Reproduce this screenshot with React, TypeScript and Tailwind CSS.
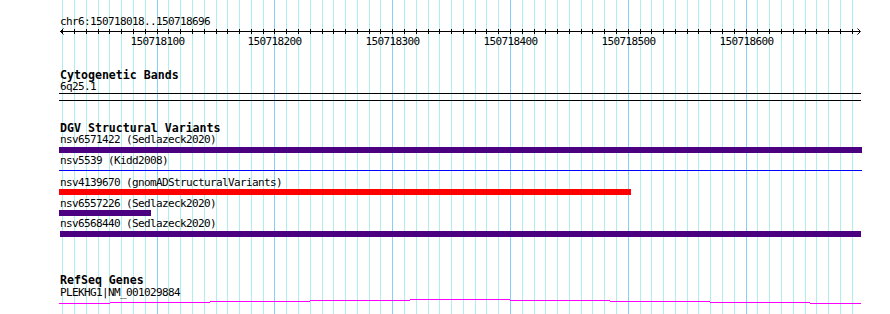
import React from "react";

const START = 150718100;
const xOf = (bp: number) => Math.round(156.6 + (bp - START) * 1.178);

const minor: number[] = [];
for (let bp = 150718020; bp <= 150718690; bp += 10) minor.push(bp);
const majors = [150718100, 150718200, 150718300, 150718400, 150718500, 150718600];

const mono = "font-['DejaVu_Sans_Mono','Liberation_Mono',monospace]";

function Label({ children, top }: { children: React.ReactNode; top: string }) {
  return (
    <div className={`${top} ml-[60px] h-[10px] text-[11px] leading-[10px] tracking-[-0.62px] text-black whitespace-nowrap ${mono}`}>
      {children}
    </div>
  );
}

function Title({ children, top }: { children: React.ReactNode; top: string }) {
  return (
    <div className={`${top} ml-[60px] h-[12px] text-[11.6px] leading-[12px] font-bold text-black whitespace-nowrap ${mono}`}>
      {children}
    </div>
  );
}

export default function App() {
  const magenta: [number, number, number][] = [
    [59, 110, 303],
    [110, 210, 302],
    [210, 310, 301],
    [310, 410, 300],
    [410, 510, 299],
    [510, 610, 300],
    [610, 710, 301],
    [710, 810, 302],
    [810, 861, 303],
  ];
  return (
    <div className="relative w-[890px] h-[314px] bg-white overflow-hidden">
      <svg className="absolute inset-0 pointer-events-none" width={890} height={314}>
        {minor.map((bp) => {
          const isMajor = bp % 100 === 0;
          const x = xOf(bp) + 0.5;
          return (
            <line
              key={bp}
              x1={x}
              x2={x}
              y1={0}
              y2={314}
              stroke={isMajor ? "#87cefa" : "#aeeeee"}
              strokeWidth={1}
            />
          );
        })}
      </svg>

      <div className="relative flex flex-col">
        <Label top="mt-[17px]">chr6:150718018..150718696</Label>

        <svg width={890} height={20} className="block">
          <line x1={60} x2={860} y1={4.5} y2={4.5} stroke="#000" strokeWidth={1} />
          <polyline points="63.5,1.5 60.5,4.5 63.5,7.5" fill="none" stroke="#000" strokeWidth={1} />
          <polyline points="857.5,1.5 860.5,4.5 857.5,7.5" fill="none" stroke="#000" strokeWidth={1} />
          {minor.map((bp) => {
            const x = xOf(bp) + 0.5;
            return <line key={bp} x1={x} x2={x} y1={2} y2={7} stroke="#000" strokeWidth={1} />;
          })}
          {majors.map((bp) => (
            <text
              key={bp}
              x={xOf(bp) + 0.5}
              y={17.8}
              textAnchor="middle"
              fontSize={11}
              letterSpacing={-0.62}
              fontFamily="'DejaVu Sans Mono','Liberation Mono',monospace"
              fill="#000"
            >
              {bp}
            </text>
          ))}
        </svg>

        <Title top="mt-[22px]">Cytogenetic Bands</Title>
        <Label top="mt-[1px]">6q25.1</Label>
        <div className="mt-[1px] ml-[59px] w-[802px] h-[1px] bg-black" />
        <div className="mt-[6px] ml-[59px] w-[802px] h-[1px] bg-black" />

        <Title top="mt-[21px]">DGV Structural Variants</Title>
        <Label top="mt-[1px]">nsv6571422 (Sedlazeck2020)</Label>
        <div className="mt-[2px] ml-[59px] w-[803px] h-[6px] bg-[#4b0082]" />
        <Label top="mt-[3px]">nsv5539 (Kidd2008)</Label>
        <div className="mt-[4px] ml-[59px] w-[803px] h-[1px] bg-[#0000ff]" />
        <Label top="mt-[7px]">nsv4139670 (gnomADStructuralVariants)</Label>
        <div className="mt-[1px] ml-[59px] w-[572px] h-[6px] bg-[#ff0000]" />
        <Label top="mt-[4px]">nsv6557226 (Sedlazeck2020)</Label>
        <div className="mt-[1px] ml-[59px] w-[92px] h-[6px] bg-[#4b0082]" />
        <Label top="mt-[3px]">nsv6568440 (Sedlazeck2020)</Label>
        <div className="mt-[2px] ml-[60px] w-[801px] h-[6px] bg-[#4b0082]" />

        <Title top="mt-[37px]">RefSeq Genes</Title>
        <Label top="mt-[2px]">PLEKHG1|NM_001029884</Label>
        <svg width={890} height={8} className="block">
          {magenta.map(([a, b, y], i) => (
            <rect key={i} x={a} y={y - 298} width={b - a} height={1} fill="#ff00ff" />
          ))}
        </svg>
      </div>
    </div>
  );
}
